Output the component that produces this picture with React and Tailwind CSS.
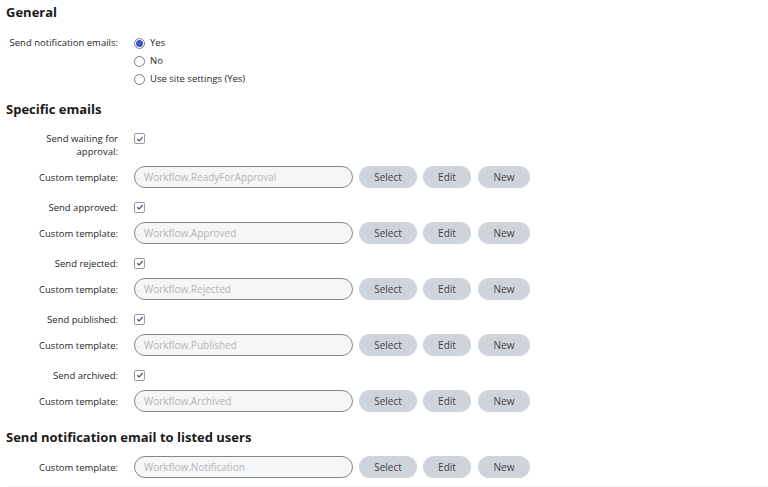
const EMAILS = [
  { label: ['Send waiting for', 'approval:'], template: 'Workflow.ReadyForApproval' },
  { label: ['Send approved:'], template: 'Workflow.Approved' },
  { label: ['Send rejected:'], template: 'Workflow.Rejected' },
  { label: ['Send published:'], template: 'Workflow.Published' },
  { label: ['Send archived:'], template: 'Workflow.Archived' },
]

const font = { fontFamily: '"Segoe UI", "Open Sans", "Noto Sans", sans-serif' }

function Label({ children }) {
  return (
    <div className="w-[112px] shrink-0 text-right text-[9.5px] leading-[13px] text-[#1f1f1f]">
      {children}
    </div>
  )
}

function Radio({ checked, children }) {
  return (
    <label className="flex items-center gap-[5px] h-[18px] text-[9.5px] text-[#1f1f1f]">
      <span className="w-[11px] h-[11px] rounded-full border border-[#7d7d7d] bg-white flex items-center justify-center">
        {checked && <span className="w-[7px] h-[7px] rounded-full bg-[#3a57c8]" />}
      </span>
      {children}
    </label>
  )
}

function Check() {
  return (
    <span className="w-[11px] h-[11px] rounded-[2px] border border-[#9a9a9a] bg-white flex items-center justify-center">
      <svg width="8" height="8" viewBox="0 0 8 8">
        <path d="M1.3 4.2 L3.1 5.9 L6.7 2.2" fill="none" stroke="#3b4f8f" strokeWidth="1.2" />
      </svg>
    </span>
  )
}

function TemplateRow({ value }) {
  return (
    <div className="flex items-center h-[22px]">
      <Label>Custom template:</Label>
      <div className="ml-[16px] flex items-center">
        <div className="w-[219px] h-[22px] rounded-full border border-[#878787] bg-[#f5f6f7] flex items-center px-[9px] text-[10px] text-[#b4b4b4]">
          {value}
        </div>
        <button className="ml-[6px] w-[58px] h-[22px] rounded-full bg-[#cfd3da] text-[10px] text-[#3f444c]">Select</button>
        <button className="ml-[6px] w-[48px] h-[22px] rounded-full bg-[#cfd3da] text-[10px] text-[#3f444c]">Edit</button>
        <button className="ml-[7px] w-[52px] h-[22px] rounded-full bg-[#cfd3da] text-[10px] text-[#3f444c]">New</button>
      </div>
    </div>
  )
}

function Heading({ className, children }) {
  return (
    <h2 className={`text-[13px] font-bold text-[#1a1a1a] h-[18px] leading-[18px] ${className}`}>{children}</h2>
  )
}

export default function App() {
  return (
    <div className="w-[768px] h-[487px] bg-white overflow-hidden" style={font}>
      <div className="pl-[6px] pt-[3px]">
        <Heading>General</Heading>

        <div className="flex mt-[13px]">
          <Label>
            <div className="h-[18px] leading-[18px]">Send notification emails:</div>
          </Label>
          <div className="ml-[16px] flex flex-col">
            <Radio checked>Yes</Radio>
            <Radio>No</Radio>
            <Radio>Use site settings (Yes)</Radio>
          </div>
        </div>

        <Heading className="mt-[12px]">Specific emails</Heading>

        <div className="mt-[14px] flex flex-col">
          {EMAILS.map((e, i) => {
            const multi = e.label.length > 1
            return (
              <div key={i} className={i > 0 ? 'mt-[8px]' : ''}>
                <div className={multi ? 'flex items-start' : 'flex items-center h-[22px]'}>
                  <Label>
                    {e.label.map((l) => (
                      <div key={l}>{l}</div>
                    ))}
                  </Label>
                  <div className={multi ? 'ml-[16px] mt-[1px]' : 'ml-[16px]'}>
                    <Check />
                  </div>
                </div>
                <div className={multi ? 'mt-[8px]' : 'mt-[4px]'}>
                  <TemplateRow value={e.template} />
                </div>
              </div>
            )
          })}
        </div>

        <Heading className="mt-[16px]">Send notification email to listed users</Heading>

        <div className="mt-[10px]">
          <TemplateRow value="Workflow.Notification" />
        </div>
      </div>
      <div className="ml-[8px] mt-[8px] border-t border-[#ececec]" />
    </div>
  )
}
